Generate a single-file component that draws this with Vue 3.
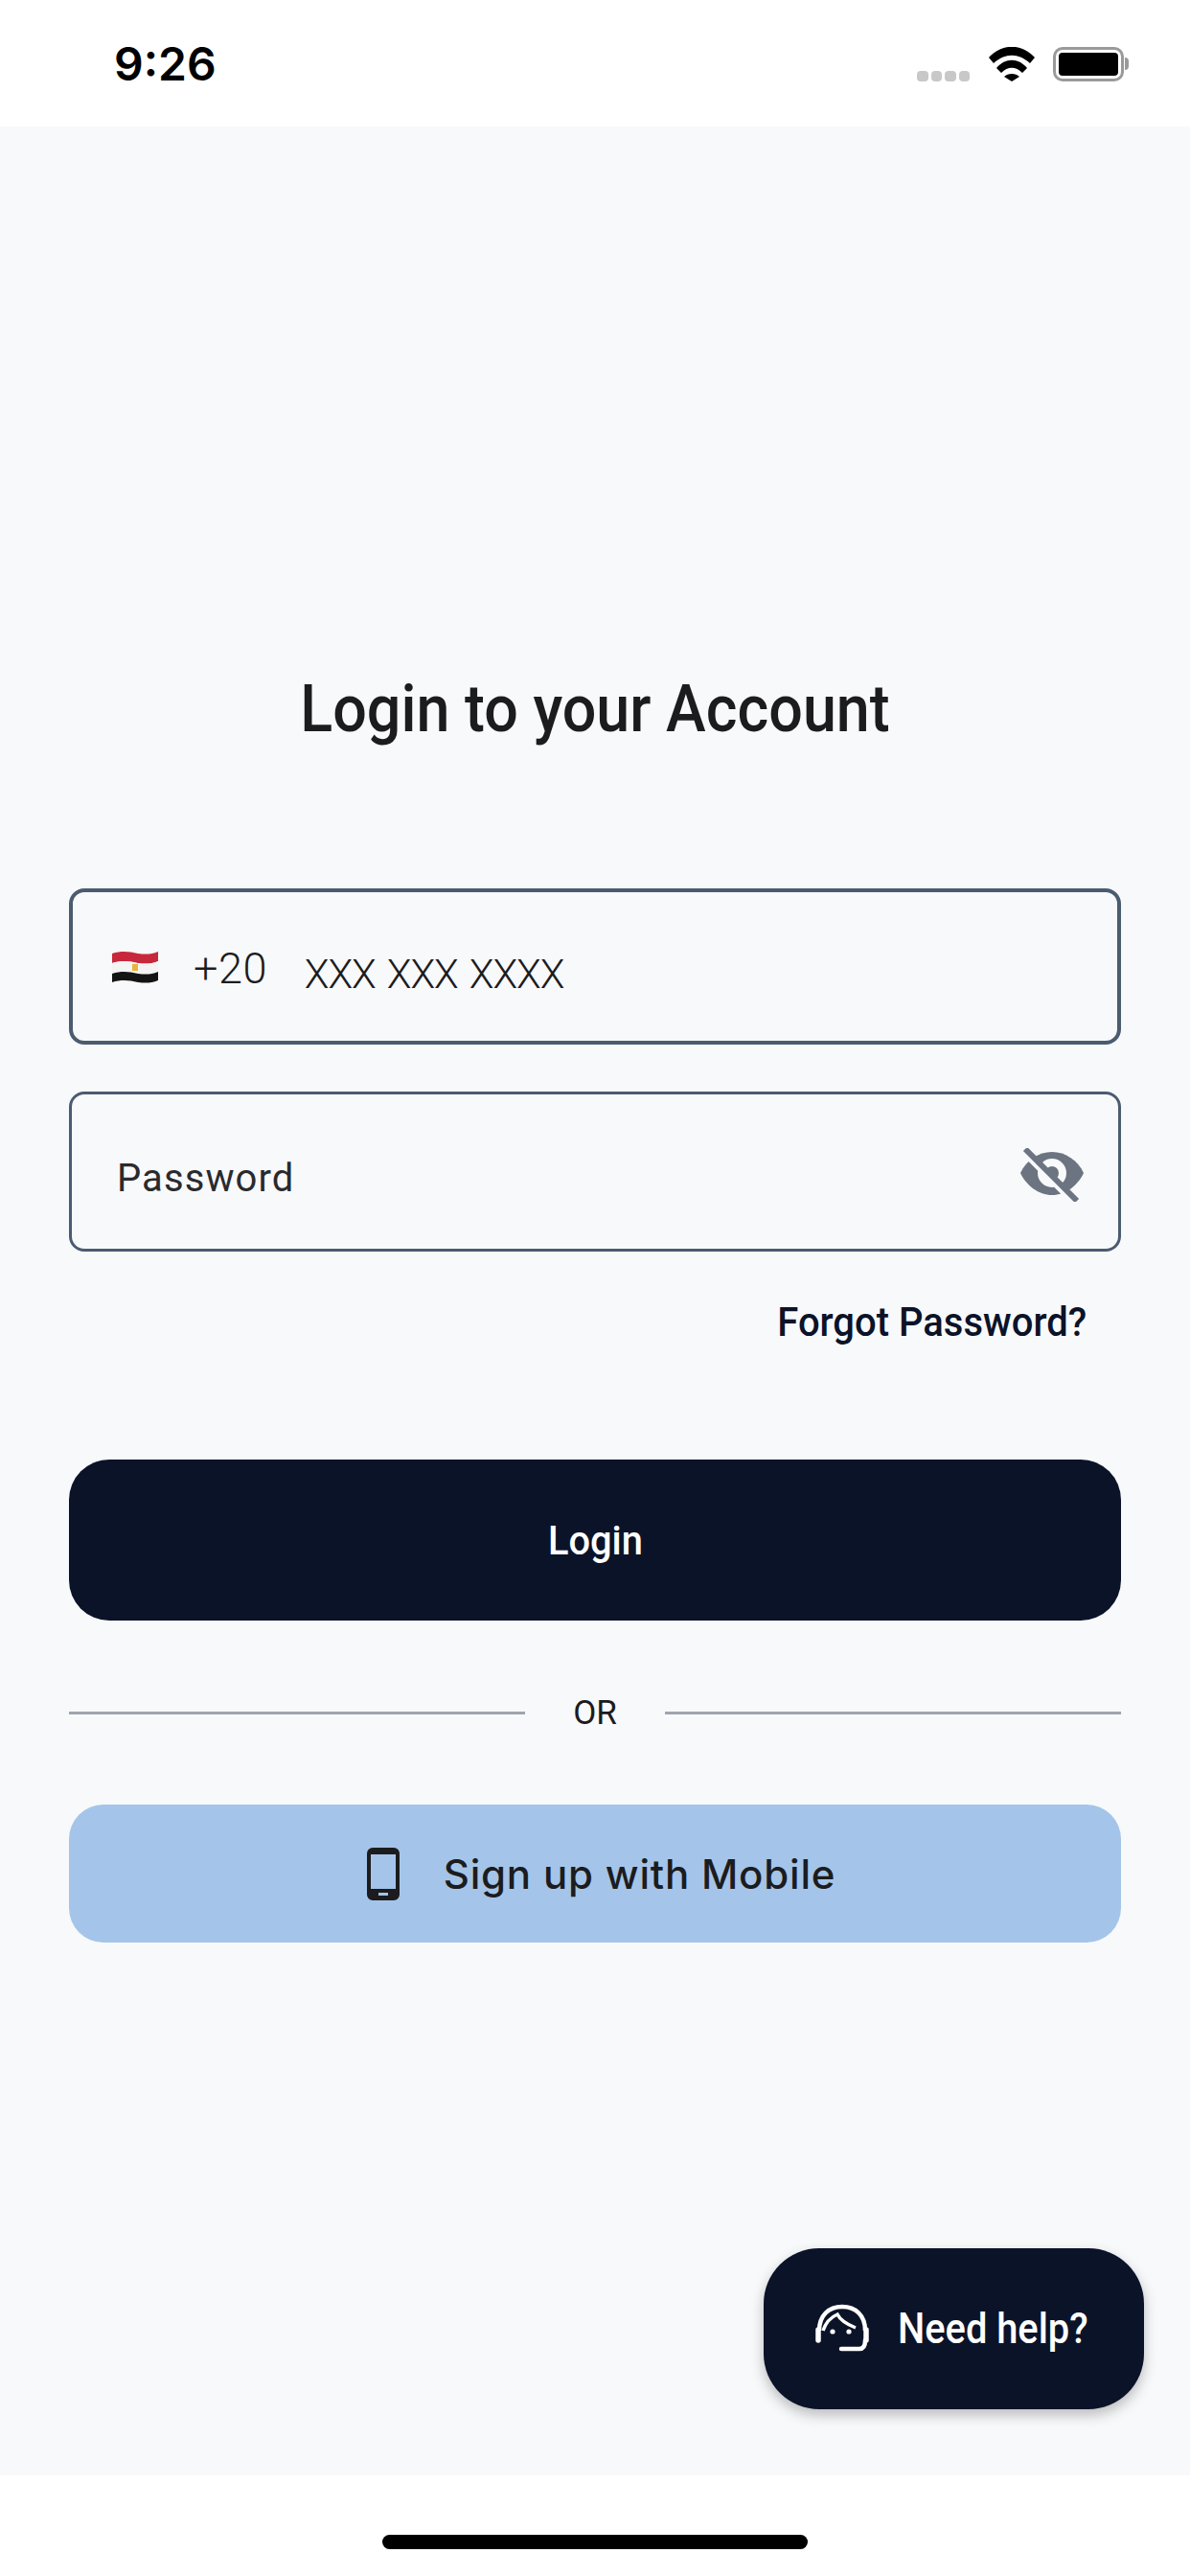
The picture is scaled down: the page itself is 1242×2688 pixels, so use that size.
<template>
  <div class="screen">
    <div class="status-bar">
      <span class="time">9:26</span>
      <div class="status-icons">
        <div class="signal">
          <i v-for="n in 4" :key="n"></i>
        </div>
        <svg class="wifi" width="48" height="36" viewBox="0 0 48 36">
          <path d="M0 11C14-4 34-4 48 11l-5 6C31 6 17 6 5 17z" fill="#000" />
          <path d="M8 22c9-11 23-11 32 0l-5 5c-7-7-15-7-22 0z" fill="#000" />
          <path d="M16 31c4-4 12-4 16 0l-8 5z" fill="#000" />
        </svg>
        <div class="battery">
          <div class="battery-body"><div class="battery-fill"></div></div>
          <div class="battery-cap"></div>
        </div>
      </div>
    </div>

    <main class="content">
      <h1 class="title">Login to your Account</h1>

      <div class="field field-phone">
        <svg class="flag" width="48" height="36" viewBox="0 0 48 36">
          <path d="M0 4C10 1 18 2 27 4c8 1 14 1 21-2v10c-7 3-13 3-21 2C18 12 10 11 0 14z" fill="#c8283c" />
          <path d="M0 14c10-3 18-2 27 0 8 1 14 1 21-2v11c-7 3-13 3-21 2-9-2-17-3-27 0z" fill="#f4f4f4" />
          <path d="M0 25c10-3 18-2 27 0 8 1 14 1 21-2v9c-7 3-13 3-21 2-9-2-17-3-27 0z" fill="#141414" />
          <rect x="21" y="15" width="6" height="7" fill="#e8b53a" />
        </svg>
        <span class="dial">+20</span>
        <span class="mask">XXX XXX XXXX</span>
      </div>

      <div class="field field-password">
        <span class="password-label">Password</span>
        <svg class="eye" width="66" height="56" viewBox="0 0 66 56">
          <path d="M33 4C19 4 6 13 0 26c6 13 19 23 33 23s27-10 33-23C60 13 47 4 33 4z" fill="#6b7480" />
          <circle cx="33" cy="26" r="15" fill="#f8f9fb" />
          <circle cx="33" cy="26" r="7" fill="#6b7480" />
          <path d="M1 3l54 54" stroke="#f8f9fb" stroke-width="5" />
          <path d="M5 1l54 54" stroke="#6b7480" stroke-width="6" />
        </svg>
      </div>

      <div class="forgot"><span>Forgot Password?</span></div>

      <button class="btn-login"><span>Login</span></button>

      <div class="divider">
        <span class="rule"></span>
        <span class="or">OR</span>
        <span class="rule"></span>
      </div>

      <button class="btn-signup">
        <svg width="34" height="55" viewBox="0 0 34 55">
          <path fill-rule="evenodd" d="M6 0h22a6 6 0 0 1 6 6v43a6 6 0 0 1-6 6H6a6 6 0 0 1-6-6V6a6 6 0 0 1 6-6zM4 7v36h26V7zM12 47v3h10v-3z" fill="#1c1c1e" />
        </svg>
        <span>Sign up with Mobile</span>
      </button>

      <button class="btn-help">
        <svg width="70" height="60" viewBox="0 0 70 60" fill="none" stroke="#fff">
          <path d="M10 32C10 16 20 7 34 7s24 9 24 25" stroke-width="4.500" />
          <path d="M14 32c3-9 8-14 15-17 3 6 9 10 19 14" stroke-width="3.500" />
          <path d="M9 31v11M59 31v11" stroke-width="5.500" stroke-linecap="round" />
          <path d="M58 42c0 6-2 9-6 9H33" stroke-width="4.500" stroke-linecap="round" />
          <circle cx="24" cy="33" r="2.600" fill="#fff" stroke="none" />
          <circle cx="41" cy="33" r="2.600" fill="#fff" stroke="none" />
        </svg>
        <span>Need help?</span>
      </button>
    </main>

    <div class="home-area">
      <div class="home-bar"></div>
    </div>
  </div>
</template>

<script setup>
</script>

<style scoped>
.screen {
  width: 1242px;
  height: 2688px;
  display: flex;
  flex-direction: column;
  background: #fff;
  font-family: "Roboto", "Liberation Sans", sans-serif;
}

.status-bar {
  height: 132px;
  flex: none;
  display: flex;
  align-items: center;
  justify-content: space-between;
  padding: 0 64px 0 119px;
}

.time {
  font-family: "Inter", sans-serif;
  font-weight: 600;
  font-size: 48px;
  color: #000;
}

.status-icons {
  display: flex;
  align-items: center;
  margin-top: 1px;
}

.signal {
  display: flex;
  gap: 3px;
  margin: 25px 20px 0 0;
}

.signal i {
  width: 11.500px;
  height: 11px;
  border-radius: 4px;
  background: #c8c8c8;
}

.battery {
  display: flex;
  align-items: center;
  gap: 1px;
  margin-left: 19px;
}

.battery-body {
  width: 74px;
  height: 36px;
  box-sizing: border-box;
  border: 3px solid #9a9a9a;
  border-radius: 10px;
  padding: 3px;
}

.battery-fill {
  width: 100%;
  height: 100%;
  background: #000;
  border-radius: 4px;
}

.battery-cap {
  width: 4px;
  height: 13px;
  background: #9a9a9a;
  border-radius: 0 4px 4px 0;
}

.content {
  position: relative;
  flex: 1;
  display: flex;
  flex-direction: column;
  background: #f8f9fb;
  padding: 0 72px;
}

.title {
  margin: 571px 0 0;
  height: 74px;
  line-height: 74px;
  font-size: 69px;
  font-weight: 500;
  text-align: center;
  color: #1c1c1e;
  transform: scaleX(0.91);
}

.field {
  display: flex;
  align-items: center;
  box-sizing: border-box;
  border-radius: 16px;
  border-style: solid;
  border-color: #4b5b70;
}

.field-phone {
  height: 163px;
  margin-top: 150px;
  border-width: 4px;
  padding-left: 41px;
}

.flag {
  flex: none;
}

.dial {
  font-weight: 300;
  font-size: 45px;
  color: #1c1c1e;
  margin-left: 37px;
  margin-top: 4px;
  letter-spacing: 0.5px;
}

.mask {
  font-weight: 300;
  font-size: 42px;
  color: #1c1c1e;
  margin-left: 39px;
  margin-top: 16px;
  letter-spacing: -1.100px;
  word-spacing: 3px;
}

.field-password {
  height: 167px;
  margin-top: 49px;
  border-width: 3px;
  padding: 0 36px 0 47px;
  justify-content: space-between;
}

.password-label {
  font-size: 40px;
  letter-spacing: 1.100px;
  color: #2a2a2e;
  margin-top: 13px;
}

.eye {
  margin-top: 6px;
}

.forgot {
  align-self: flex-end;
  margin: 48px 36px 0 0;
  height: 50px;
  line-height: 50px;
  font-size: 43px;
  font-weight: 500;
  color: #0b1329;
  transform: scaleX(0.93);
  transform-origin: right center;
}

.btn-login {
  height: 168px;
  margin-top: 119px;
  flex: none;
  border: 0;
  border-radius: 42px;
  background: #0b1329;
  color: #fff;
  font-family: inherit;
  font-size: 43px;
  font-weight: 500;
}

.btn-login span {
  display: inline-block;
  transform: scaleX(0.925);
}

.divider {
  display: flex;
  align-items: center;
  gap: 50px;
  margin-top: 72px;
  height: 48px;
}

.rule {
  flex: 1;
  height: 3px;
  background: #a0a4ac;
}

.or {
  font-size: 35px;
  color: #1c1c1e;
}

.btn-signup {
  height: 144px;
  margin-top: 72px;
  flex: none;
  border: 0;
  border-radius: 36px;
  background: #a4c5e9;
  display: flex;
  align-items: center;
  justify-content: center;
  gap: 46px;
  padding-left: 19px;
  font-family: "Inter", sans-serif;
  font-size: 42px;
  font-weight: 500;
  letter-spacing: 0.800px;
  color: #1c1c1e;
}

.btn-help {
  position: absolute;
  left: 797px;
  top: 2214px;
  width: 397px;
  height: 168px;
  border: 0;
  border-radius: 58px;
  background: #0b1329;
  box-shadow: 0 6px 14px rgba(0, 0, 0, 0.25);
  display: flex;
  align-items: center;
  gap: 22px;
  padding: 0 0 0 48px;
  color: #fff;
  font-family: inherit;
  font-size: 44px;
  font-weight: 500;
}

.btn-help span {
  transform: scaleX(0.905);
  transform-origin: left center;
  white-space: nowrap;
}

.home-area {
  height: 105px;
  flex: none;
  display: flex;
  justify-content: center;
  padding-top: 62px;
  box-sizing: border-box;
}

.home-bar {
  width: 444px;
  height: 15px;
  border-radius: 8px;
  background: #000;
}
</style>
